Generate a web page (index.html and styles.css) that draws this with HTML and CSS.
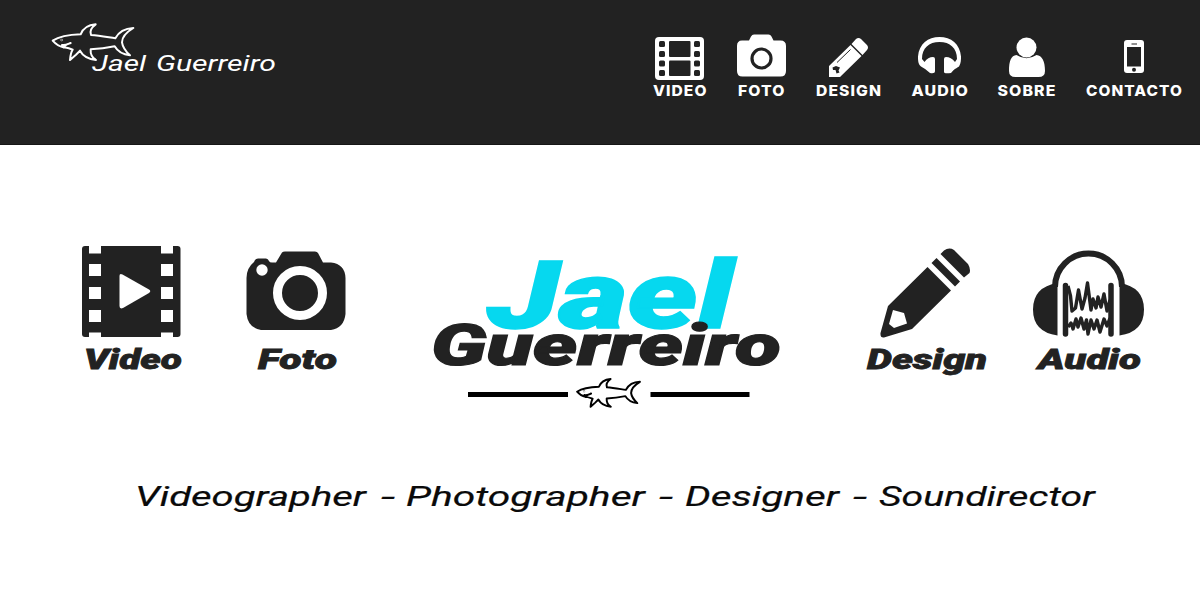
FILE: index.html
```html
<!DOCTYPE html>
<html lang="pt">
<head>
<meta charset="utf-8">
<title>Jael Guerreiro</title>
<link rel="stylesheet" href="styles.css">
</head>
<body>
<svg class="defs" width="0" height="0" aria-hidden="true">
  <symbol id="shark" viewBox="30 36 258 122">
    <path d="M38 92C58 79 90 74 122 73C129 55 145 45 167 43C152 54 149 65 153 75C180 77 205 82 226 85C235 68 255 55 280 54C260 66 246 83 246 97C248 112 258 125 270 136C250 134 232 123 224 109C200 114 175 117 152 118C151 131 158 144 168 150C145 147 128 137 120 122L108 134L90 150C91 138 92 128 98 119C86 115 78 112 70 112C55 109 46 101 38 92ZM66 105C76 107 84 102 92 99M70 112L78 105"/>
    <circle cx="65" cy="90" r="0.5"/>
  </symbol>
</svg>

<header class="header">
  <a class="brand">
    <svg viewBox="40 10 250 80" width="250" height="80">
      <use class="shark shark--light" href="#shark" x="50" y="22" width="86" height="40.67"/>
      <text class="brand-text" x="92" y="71" textLength="54" lengthAdjust="spacingAndGlyphs">Jael</text>
      <text class="brand-text" x="156" y="71" textLength="120" lengthAdjust="spacingAndGlyphs">Guerreiro</text>
    </svg>
  </a>
  <nav class="nav">
    <a><svg viewBox="640 30 82 75" width="82" height="75">
      <rect class="light" x="655" y="37" width="49" height="43" rx="4"/>
      <g class="dark">
        <rect x="659" y="41" width="6" height="6" rx="1.5"/><rect x="659" y="51" width="6" height="6" rx="1.5"/><rect x="659" y="60.5" width="6" height="6" rx="1.5"/><rect x="659" y="70" width="6" height="6" rx="1.5"/>
        <rect x="694" y="41" width="6" height="6" rx="1.5"/><rect x="694" y="51" width="6" height="6" rx="1.5"/><rect x="694" y="60.5" width="6" height="6" rx="1.5"/><rect x="694" y="70" width="6" height="6" rx="1.5"/>
        <rect x="669" y="41" width="21.5" height="16" rx="1"/><rect x="669" y="60.5" width="21.5" height="15.5" rx="1"/>
      </g>
      <text class="nav-text" x="653" y="96" textLength="54.5" lengthAdjust="spacingAndGlyphs">VIDEO</text>
    </svg></a>
    <a><svg viewBox="722 30 79 75" width="79" height="75">
      <path class="light" d="M742 40.5h7l2-4q1-2 3-2h14.5q2 0 3 2l2 4h7q5.500 0 5.500 5.500v25q0 5.500-5.500 5.500H742.500q-5.500 0-5.500-5.500V46q0-5.500 5-5.500z"/>
      <circle class="ring" cx="761.5" cy="58.5" r="9.5"/>
      <text class="nav-text" x="738" y="96" textLength="47.5" lengthAdjust="spacingAndGlyphs">FOTO</text>
    </svg></a>
    <a><svg viewBox="801 30 95 75" width="95" height="75">
      <path class="light" d="M829 66L850.500 45L861.500 56L840 77H829ZM851.500 44L856 39Q858.500 37 861 39L867 45Q869 47.500 867 50L862.500 55Z"/>
      <path class="lead" d="M837 62.500L850.500 49.500"/>
      <path class="dark" d="M832.500 67.500L836 66L840 67.500L838.500 70.500L839.500 72.500L836.500 73.500L835.500 70L833 70Z"/>
      <text class="nav-text" x="816" y="96" textLength="66" lengthAdjust="spacingAndGlyphs">DESIGN</text>
    </svg></a>
    <a><svg viewBox="896 30 87 75" width="87" height="75">
      <path class="light" d="M921 66.500C918 64 918 60 918 56.500C919 44 928 37 939.500 37S960 44 961 56.500C961 60 961 63 959 66.500C957 68 954 69 951 73Q944 74 944 72V59Q944 57 946 57Q951 57 955 62L957 59C957 48 950 42 939.500 42S922 48 922 59L924.500 62Q928 57 933 57Q935 57 935 59V71Q935 74 930 73Q926 69 921 66.500Z"/>
      <text class="nav-text" x="911.5" y="96" textLength="57.5" lengthAdjust="spacingAndGlyphs">AUDIO</text>
    </svg></a>
    <a><svg viewBox="983 30 87 75" width="87" height="75">
      <circle class="light" cx="1026.5" cy="47.5" r="10"/>
      <path class="light" d="M1016.500 55Q1026.500 61.500 1036.500 55C1042 55.500 1045 61 1045 71Q1045 77 1038.500 77H1015.500Q1009 77 1009 71C1009 61 1011 55.500 1016.500 55Z"/>
      <text class="nav-text" x="997.5" y="96" textLength="59" lengthAdjust="spacingAndGlyphs">SOBRE</text>
    </svg></a>
    <a><svg viewBox="1070 30 130 75" width="130" height="75">
      <rect class="light" x="1124" y="40" width="20" height="33" rx="3"/>
      <rect class="dark" x="1127" y="47" width="14" height="19.5"/>
      <rect class="dark" x="1131.5" y="43.5" width="5.5" height="1"/>
      <circle class="dark" cx="1134" cy="69.7" r="2"/>
      <text class="nav-text" x="1086" y="96" textLength="97" lengthAdjust="spacingAndGlyphs">CONTACTO</text>
    </svg></a>
  </nav>
</header>

<main>
  <section class="hero">
    <svg viewBox="70 235 145 190" width="145" height="190">
      <rect class="dark" x="82" y="246" width="98.5" height="91" rx="3"/>
      <g class="paper">
        <path d="M89 245h12v8.500H89zM161 245h12v8.500h-12zM89 332.500h12v5H89zM161 332.500h12v5h-12z"/>
        <path d="M89 264h12v12H89zM161 264h12v12h-12zM89 287h12v12H89zM161 287h12v12h-12zM89 310h12v12H89zM161 310h12v12h-12z"/>
        <path d="M119.500 276Q119.500 273 122.500 274.500L149 289.500Q151.500 291 149 293L123 308Q119.500 309.500 119.500 306Z"/>
      </g>
      <text class="caption" x="84" y="368.5" textLength="98" lengthAdjust="spacingAndGlyphs">Video</text>
    </svg>
    <svg viewBox="215 235 165 190" width="165" height="190">
      <path class="dark" d="M254 262L255 260Q256 258.500 258 258.500H266Q268 258.500 269 261Q269.500 262.500 272 262.500H276L282 252.500Q283 251.500 285 251.500H315Q317 251.500 318 253L323 262.500H331Q345 264 345.500 278V314Q344 328 331 330H261Q248 328 246.500 314V278Q246.500 268 254 262Z"/>
      <circle class="paper" cx="262" cy="270" r="5.7"/>
      <circle class="lens" cx="300" cy="293" r="22.5"/>
      <text class="caption" x="258" y="368.5" textLength="79" lengthAdjust="spacingAndGlyphs">Foto</text>
    </svg>
    <svg viewBox="380 235 440 190" width="440" height="190">
      <text class="title title--first" x="487" y="328" textLength="246" lengthAdjust="spacingAndGlyphs">Jael</text>
      <text class="title title--last" x="431" y="364.5" textLength="350" lengthAdjust="spacingAndGlyphs">Guerreiro</text>
      <path class="rule" d="M468 394.500H568M650.500 394.500H749.500"/>
      <use class="shark shark--dark" href="#shark" x="575" y="377" width="67" height="32"/>
    </svg>
    <svg viewBox="820 235 190 190" width="190" height="190">
      <path class="dark" d="M927.500 267L951 290.500L912 329L884 337.500Q880 338 880.500 333L888 306ZM931.500 263L936.500 258L960 281.500L955 286.500ZM940.500 254L944 250.500Q949 247 954 250L968 264Q971 269 969.500 273L964 277.500Z"/>
      <path class="paper" d="M893 310L904 313L907 323.500L894 328L889 324Z"/>
      <text class="caption" x="867" y="368.5" textLength="120" lengthAdjust="spacingAndGlyphs">Design</text>
    </svg>
    <svg viewBox="1010 235 150 190" width="150" height="190">
      <path class="dark" d="M1057.500 283V335.500Q1033 332 1033 309.500T1057.500 283ZM1119.500 283V335.500Q1144 332 1144 309.500T1119.500 283Z"/>
      <path class="band" d="M1055 287A33.500 33.500 0 0 1 1122 287"/>
      <path class="bar" d="M1065.500 285.500V334M1111 285.500V334"/>
      <path class="wave" d="M1068 286L1070.500 296L1072 311L1075.500 308L1078.500 290L1082 309L1085 298L1087.500 283L1091 310L1093 299L1096 308L1098 297L1101 307L1104 294L1107 311L1110 300M1068 327L1071 323L1073 329L1076 319L1078 327L1081 318L1084 329L1086.500 320L1088 334L1091 320L1094 329L1097 320L1100 332L1104 319L1107 326L1110 318"/>
      <text class="caption" x="1038" y="368.5" textLength="103" lengthAdjust="spacingAndGlyphs">Audio</text>
    </svg>
  </section>

  <section class="tagline">
    <svg viewBox="120 470 1000 50" width="1000" height="50">
      <g class="tagline-text">
        <text x="135" y="505.5" textLength="231" lengthAdjust="spacingAndGlyphs">Videographer</text>
        <text x="381" y="505.5" textLength="14" lengthAdjust="spacingAndGlyphs">-</text>
        <text x="406" y="505.5" textLength="239" lengthAdjust="spacingAndGlyphs">Photographer</text>
        <text x="659" y="505.5" textLength="14" lengthAdjust="spacingAndGlyphs">-</text>
        <text x="685" y="505.5" textLength="154" lengthAdjust="spacingAndGlyphs">Designer</text>
        <text x="853" y="505.5" textLength="14" lengthAdjust="spacingAndGlyphs">-</text>
        <text x="879" y="505.5" textLength="216" lengthAdjust="spacingAndGlyphs">Soundirector</text>
      </g>
    </svg>
  </section>
</main>
</body>
</html>
```
FILE: styles.css
```css
body {
  margin: 0;
  height: 600px;
  overflow: hidden;
  background: #fff;
  font-family: Roboto, "Open Sans", sans-serif;
}
svg { display: block; }
.defs { height: 0; }

.header {
  display: flex;
  justify-content: space-between;
  box-sizing: border-box;
  height: 145px;
  background: #222;
  border-bottom: 1px solid #161616;
}
.brand { padding: 10px 0 0 40px; }
.nav { display: flex; padding-top: 30px; }
.brand-text {
  font-size: 21.5px;
  font-style: italic;
  font-weight: 400;
  fill: #fff;
}
.nav-text {
  font-family: Inter, "Open Sans", sans-serif;
  font-size: 14.5px;
  font-weight: 800;
  letter-spacing: 1px;
  fill: #fff;
}

.light { fill: #fff; }
.dark { fill: #222; }
.paper { fill: #fff; }
.ring { fill: none; stroke: #222; stroke-width: 3.2; }
.lead { fill: none; stroke: #222; stroke-width: 1; }
.lens { fill: none; stroke: #fff; stroke-width: 9; }
.band { fill: none; stroke: #222; stroke-width: 6; }
.bar { stroke: #222; stroke-width: 5.5; stroke-linecap: round; }
.wave { fill: none; stroke: #222; stroke-width: 3.4; stroke-linejoin: round; }
.rule { stroke: #000; stroke-width: 5; }

.shark { stroke-linejoin: round; stroke-linecap: round; }
.shark--light { fill: none; stroke: #fff; stroke-width: 6; }
.shark--dark { fill: none; stroke: #000; stroke-width: 7.5; }

.hero { display: flex; padding: 90px 0 0 70px; }
.caption {
  font-size: 28px;
  font-style: italic;
  font-weight: 900;
  fill: #222;
  stroke: #222;
  stroke-width: .8;
}
.title { font-style: italic; font-weight: 900; }
.title--first { font-size: 95px; fill: #06d8ef; stroke: #06d8ef; stroke-width: 1.5; }
.title--last { font-size: 57.5px; fill: #222; stroke: #222; stroke-width: 1.2; }

.tagline { display: flex; padding: 45px 0 0 120px; }
.tagline-text {
  font-size: 28px;
  font-style: italic;
  font-weight: 400;
  fill: #0a0a0a;
  stroke: #0a0a0a;
  stroke-width: .2;
}
```
